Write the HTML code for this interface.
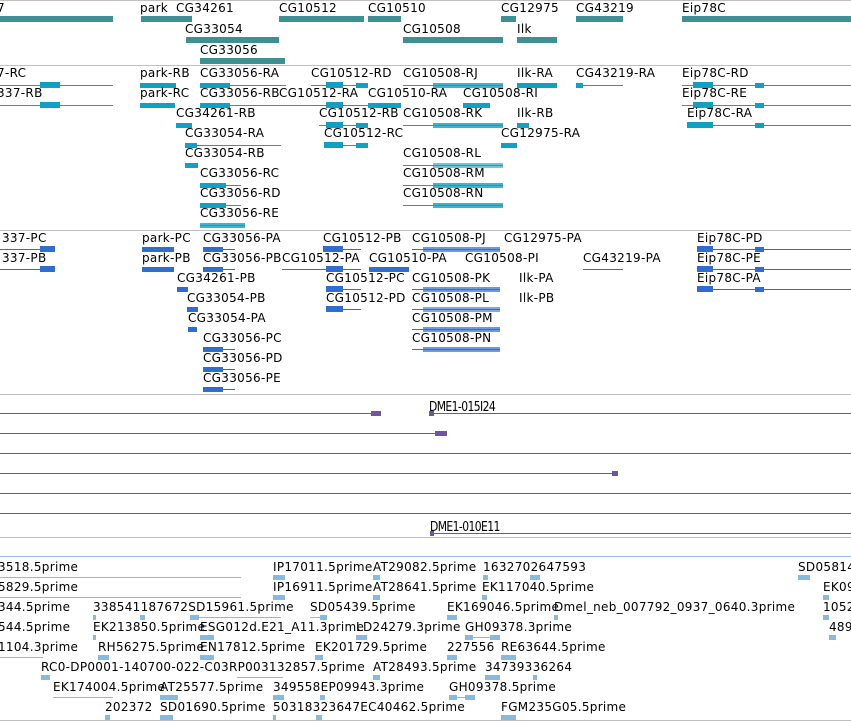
<!DOCTYPE html>
<html><head><meta charset="utf-8"><style>
body{margin:0;width:851px;height:722px;overflow:hidden;background:#fff;position:relative}
.t{position:absolute;font:12px "DejaVu Sans","Liberation Sans",sans-serif;letter-spacing:.3px;line-height:12px;white-space:nowrap;color:#000}
.d{position:absolute;font:12px "DejaVu Sans Condensed","DejaVu Sans",sans-serif;letter-spacing:-.6px;line-height:12px;white-space:nowrap;color:#000;transform:scaleY(1.1);transform-origin:0 0}
i{position:absolute;display:block}
.s{height:1px;background:#c0c0c0;left:0;width:851px}
.c1{background:#3f9095}.c2{background:#0fa0c2}.c3{background:#2f6ecf}.c4{background:#6e55a0}.c5{background:#86badf}
.g{height:6px}.l{height:1px}.a{height:5px}
</style></head><body>
<i class="s" style="top:0"></i><i class="s" style="top:65px"></i><i class="s" style="top:230px"></i><i class="s" style="top:394px"></i><i class="s" style="top:537px"></i><i class="s" style="top:556px;background:#9cc4e2"></i><i class="s" style="top:720px"></i>

<!-- Section 1 -->
<div class="t" style="left:-3px;top:2px">7</div><i class="g c1" style="left:0;top:16px;width:113px"></i>
<div class="t" style="left:140px;top:2px">park</div><div class="t" style="left:176px;top:2px">CG34261</div><i class="g c1" style="left:141px;top:16px;width:51px"></i>
<div class="t" style="left:279px;top:2px">CG10512</div><i class="g c1" style="left:279px;top:16px;width:85px"></i>
<div class="t" style="left:368px;top:2px">CG10510</div><i class="g c1" style="left:368px;top:16px;width:33px"></i>
<div class="t" style="left:501px;top:2px">CG12975</div><i class="g c1" style="left:501px;top:16px;width:15px"></i>
<div class="t" style="left:576px;top:2px">CG43219</div><i class="g c1" style="left:576px;top:16px;width:47px"></i>
<div class="t" style="left:682px;top:2px">Eip78C</div><i class="g c1" style="left:682px;top:16px;width:169px"></i>
<div class="t" style="left:185px;top:23px">CG33054</div><i class="g c1" style="left:186px;top:37px;width:93px"></i>
<div class="t" style="left:403px;top:23px">CG10508</div><i class="g c1" style="left:403px;top:37px;width:100px"></i>
<div class="t" style="left:517px;top:23px">Ilk</div><i class="g c1" style="left:517px;top:37px;width:40px"></i>
<div class="t" style="left:200px;top:44px">CG33056</div><i class="g c1" style="left:200px;top:58px;width:85px"></i>

<!-- Section 2 -->
<div class="t" style="left:-3px;top:67px">7-RC</div><i class="l c2" style="left:0;top:85px;width:113px"></i><i class="g c2" style="left:40px;top:82px;width:20px"></i>
<div class="t" style="left:140px;top:67px">park-RB</div><i class="a c2" style="left:140px;top:83px;width:36px"></i>
<div class="t" style="left:200px;top:67px">CG33056-RA</div><i class="l c2" style="left:200px;top:85px;width:86px"></i><i class="a c2" style="left:200px;top:83px;width:30px"></i>
<div class="t" style="left:311px;top:67px">CG10512-RD</div><i class="l c2" style="left:311px;top:85px;width:57px"></i><i class="g c2" style="left:326px;top:82px;width:17px"></i><i class="a c2" style="left:356px;top:83px;width:12px"></i>
<div class="t" style="left:403px;top:67px">CG10508-RJ</div><i class="l c2" style="left:403px;top:85px;width:100px"></i><i class="a c2" style="left:433px;top:83px;width:70px;opacity:.8"></i>
<div class="t" style="left:517px;top:67px">Ilk-RA</div><i class="a c2" style="left:517px;top:83px;width:40px"></i>
<div class="t" style="left:576px;top:67px">CG43219-RA</div><i class="l c2" style="left:576px;top:85px;width:47px"></i><i class="a c2" style="left:576px;top:83px;width:7px"></i>
<div class="t" style="left:682px;top:67px">Eip78C-RD</div><i class="l c2" style="left:682px;top:85px;width:169px"></i><i class="g c2" style="left:693px;top:82px;width:20px"></i><i class="a c2" style="left:755px;top:83px;width:9px"></i>

<div class="t" style="left:-3px;top:87px">337-RB</div><i class="l c2" style="left:0;top:105px;width:113px"></i><i class="g c2" style="left:40px;top:102px;width:20px"></i>
<div class="t" style="left:140px;top:87px">park-RC</div><i class="a c2" style="left:140px;top:103px;width:35px"></i>
<div class="t" style="left:200px;top:87px">CG33056-RB</div><i class="l c2" style="left:200px;top:105px;width:168px"></i><i class="a c2" style="left:200px;top:103px;width:30px"></i>
<div class="t" style="left:279px;top:87px">CG10512-RA</div><i class="g c2" style="left:326px;top:102px;width:17px"></i>
<div class="t" style="left:368px;top:87px">CG10510-RA</div><i class="a c2" style="left:368px;top:103px;width:33px"></i>
<div class="t" style="left:463px;top:87px">CG10508-RI</div><i class="a c2" style="left:463px;top:103px;width:27px"></i>
<div class="t" style="left:682px;top:87px">Eip78C-RE</div><i class="l c2" style="left:682px;top:105px;width:169px"></i><i class="g c2" style="left:693px;top:102px;width:20px"></i><i class="a c2" style="left:755px;top:103px;width:9px"></i>

<div class="t" style="left:176px;top:107px">CG34261-RB</div><i class="a c2" style="left:176px;top:123px;width:16px"></i>
<div class="t" style="left:319px;top:107px">CG10512-RB</div><i class="l c2" style="left:319px;top:125px;width:49px"></i><i class="g c2" style="left:326px;top:122px;width:17px"></i><i class="a c2" style="left:356px;top:123px;width:12px"></i>
<div class="t" style="left:403px;top:107px">CG10508-RK</div><i class="l c2" style="left:403px;top:125px;width:100px"></i><i class="a c2" style="left:433px;top:123px;width:70px;opacity:.8"></i>
<div class="t" style="left:517px;top:107px">Ilk-RB</div><i class="a c2" style="left:517px;top:123px;width:12px"></i>
<div class="t" style="left:687px;top:107px">Eip78C-RA</div><i class="l c2" style="left:687px;top:125px;width:164px"></i><i class="g c2" style="left:687px;top:122px;width:26px"></i><i class="a c2" style="left:755px;top:123px;width:9px"></i>

<div class="t" style="left:185px;top:127px">CG33054-RA</div><i class="l c2" style="left:185px;top:145px;width:96px"></i><i class="a c2" style="left:185px;top:143px;width:12px"></i>
<div class="t" style="left:324px;top:127px">CG10512-RC</div><i class="l c2" style="left:324px;top:145px;width:44px"></i><i class="g c2" style="left:324px;top:142px;width:19px"></i><i class="a c2" style="left:356px;top:143px;width:12px"></i>
<div class="t" style="left:501px;top:127px">CG12975-RA</div><i class="a c2" style="left:501px;top:143px;width:16px"></i>

<div class="t" style="left:185px;top:147px">CG33054-RB</div><i class="a c2" style="left:185px;top:163px;width:13px"></i>
<div class="t" style="left:403px;top:147px">CG10508-RL</div><i class="l c2" style="left:403px;top:165px;width:100px"></i><i class="a c2" style="left:433px;top:163px;width:70px;opacity:.6"></i>
<div class="t" style="left:200px;top:167px">CG33056-RC</div><i class="l c2" style="left:200px;top:185px;width:41px"></i><i class="a c2" style="left:200px;top:183px;width:26px"></i>
<div class="t" style="left:403px;top:167px">CG10508-RM</div><i class="l c2" style="left:403px;top:185px;width:100px"></i><i class="a c2" style="left:433px;top:183px;width:70px;opacity:.8"></i>
<div class="t" style="left:200px;top:187px">CG33056-RD</div><i class="l c2" style="left:200px;top:205px;width:41px"></i><i class="a c2" style="left:200px;top:203px;width:26px"></i>
<div class="t" style="left:403px;top:187px">CG10508-RN</div><i class="l c2" style="left:403px;top:205px;width:100px"></i><i class="a c2" style="left:433px;top:203px;width:70px;opacity:.8"></i>
<div class="t" style="left:200px;top:207px">CG33056-RE</div><i class="l c2" style="left:200px;top:225px;width:45px"></i><i class="a c2" style="left:200px;top:223px;width:45px;opacity:.8"></i>

<!-- Section 3 -->
<div class="t" style="left:2px;top:232px">337-PC</div><i class="l c3" style="left:0;top:249px;width:55px"></i><i class="g c3" style="left:40px;top:246px;width:15px"></i>
<div class="t" style="left:142px;top:232px">park-PC</div><i class="a c3" style="left:142px;top:247px;width:32px"></i>
<div class="t" style="left:203px;top:232px">CG33056-PA</div><i class="l c3" style="left:203px;top:249px;width:32px"></i><i class="a c3" style="left:203px;top:247px;width:20px"></i>
<div class="t" style="left:323px;top:232px">CG10512-PB</div><i class="l c3" style="left:323px;top:249px;width:38px"></i><i class="g c3" style="left:323px;top:246px;width:20px"></i>
<div class="t" style="left:412px;top:232px">CG10508-PJ</div><i class="l c3" style="left:412px;top:249px;width:88px"></i><i class="a c3" style="left:423px;top:247px;width:77px;opacity:.7"></i>
<div class="t" style="left:504px;top:232px">CG12975-PA</div>
<div class="t" style="left:697px;top:232px">Eip78C-PD</div><i class="l c3" style="left:697px;top:249px;width:154px"></i><i class="g c3" style="left:697px;top:246px;width:16px"></i><i class="a c3" style="left:755px;top:247px;width:9px"></i>

<div class="t" style="left:2px;top:252px">337-PB</div><i class="l c3" style="left:0;top:269px;width:55px"></i><i class="g c3" style="left:40px;top:266px;width:15px"></i>
<div class="t" style="left:142px;top:252px">park-PB</div><i class="a c3" style="left:142px;top:267px;width:32px"></i>
<div class="t" style="left:203px;top:252px">CG33056-PB</div><i class="l c3" style="left:203px;top:269px;width:32px"></i><i class="a c3" style="left:203px;top:267px;width:20px"></i>
<div class="t" style="left:282px;top:252px">CG10512-PA</div><i class="l c3" style="left:282px;top:269px;width:79px"></i><i class="g c3" style="left:326px;top:266px;width:17px"></i>
<div class="t" style="left:369px;top:252px">CG10510-PA</div><i class="a c3" style="left:369px;top:267px;width:40px"></i>
<div class="t" style="left:465px;top:252px">CG10508-PI</div>
<div class="t" style="left:583px;top:252px">CG43219-PA</div><i class="l c3" style="left:583px;top:269px;width:40px"></i>
<div class="t" style="left:697px;top:252px">Eip78C-PE</div><i class="l c3" style="left:697px;top:269px;width:154px"></i><i class="g c3" style="left:697px;top:266px;width:16px"></i><i class="a c3" style="left:755px;top:267px;width:9px"></i>

<div class="t" style="left:177px;top:272px">CG34261-PB</div><i class="a c3" style="left:177px;top:287px;width:11px"></i>
<div class="t" style="left:326px;top:272px">CG10512-PC</div><i class="l c3" style="left:326px;top:289px;width:35px"></i><i class="g c3" style="left:326px;top:286px;width:17px"></i>
<div class="t" style="left:412px;top:272px">CG10508-PK</div><i class="l c3" style="left:412px;top:289px;width:88px"></i><i class="a c3" style="left:423px;top:287px;width:77px;opacity:.7"></i>
<div class="t" style="left:519px;top:272px">Ilk-PA</div>
<div class="t" style="left:697px;top:272px">Eip78C-PA</div><i class="l c3" style="left:697px;top:289px;width:154px"></i><i class="g c3" style="left:697px;top:286px;width:16px"></i><i class="a c3" style="left:755px;top:287px;width:9px"></i>

<div class="t" style="left:187px;top:292px">CG33054-PB</div><i class="a c3" style="left:187px;top:307px;width:11px"></i>
<div class="t" style="left:326px;top:292px">CG10512-PD</div><i class="l c3" style="left:326px;top:309px;width:35px"></i><i class="g c3" style="left:326px;top:306px;width:17px"></i>
<div class="t" style="left:412px;top:292px">CG10508-PL</div><i class="l c3" style="left:412px;top:309px;width:88px"></i><i class="a c3" style="left:423px;top:307px;width:77px;opacity:.6"></i>
<div class="t" style="left:519px;top:292px">Ilk-PB</div>
<div class="t" style="left:188px;top:312px">CG33054-PA</div><i class="a c3" style="left:188px;top:327px;width:9px"></i>
<div class="t" style="left:412px;top:312px">CG10508-PM</div><i class="l c3" style="left:412px;top:329px;width:88px"></i><i class="a c3" style="left:423px;top:327px;width:77px;opacity:.7"></i>
<div class="t" style="left:203px;top:332px">CG33056-PC</div><i class="l c3" style="left:203px;top:349px;width:32px"></i><i class="a c3" style="left:203px;top:347px;width:20px"></i>
<div class="t" style="left:412px;top:332px">CG10508-PN</div><i class="l c3" style="left:412px;top:349px;width:88px"></i><i class="a c3" style="left:423px;top:347px;width:77px;opacity:.7"></i>
<div class="t" style="left:203px;top:352px">CG33056-PD</div><i class="l c3" style="left:203px;top:369px;width:32px"></i><i class="a c3" style="left:203px;top:367px;width:20px"></i>
<div class="t" style="left:203px;top:372px">CG33056-PE</div><i class="l c3" style="left:203px;top:389px;width:32px"></i><i class="a c3" style="left:203px;top:387px;width:20px"></i>

<!-- Section 4 -->
<div class="d" style="left:429px;top:400px">DME1-015I24</div>
<i class="l c4" style="left:0;top:413px;width:375px"></i><i class="a c4" style="left:371px;top:411px;width:10px"></i>
<i class="l c4" style="left:429px;top:413px;width:422px"></i><i class="a c4" style="left:429px;top:411px;width:5px"></i>
<i class="l c4" style="left:0;top:433px;width:440px"></i><i class="a c4" style="left:435px;top:431px;width:12px"></i>
<i class="l c4" style="left:0;top:453px;width:851px"></i>
<i class="l c4" style="left:0;top:473px;width:615px"></i><i class="a c4" style="left:612px;top:471px;width:6px"></i>
<i class="l c4" style="left:0;top:493px;width:851px"></i>
<i class="l c4" style="left:0;top:513px;width:851px"></i>
<div class="d" style="left:430px;top:520px">DME1-010E11</div>
<i class="l c4" style="left:430px;top:533px;width:421px"></i><i class="a c4" style="left:430px;top:531px;width:4px"></i>

<!-- Section 5 -->
<div class="t" style="left:-2px;top:561px">3518.5prime</div><i class="l c5" style="left:0;top:577px;width:241px"></i>
<div class="t" style="left:273px;top:561px">IP17011.5prime</div><i class="a c5" style="left:273px;top:575px;width:12px"></i>
<div class="t" style="left:373px;top:561px">AT29082.5prime</div><i class="a c5" style="left:373px;top:575px;width:7px"></i>
<div class="t" style="left:483px;top:561px">1632702647593</div><i class="a c5" style="left:483px;top:575px;width:5px"></i><i class="a c5" style="left:530px;top:575px;width:10px"></i>
<div class="t" style="left:798px;top:561px">SD05814</div><i class="a c5" style="left:798px;top:575px;width:12px"></i>

<div class="t" style="left:-2px;top:581px">5829.5prime</div><i class="l c5" style="left:0;top:597px;width:241px"></i>
<div class="t" style="left:273px;top:581px">IP16911.5prime</div><i class="a c5" style="left:273px;top:595px;width:12px"></i>
<div class="t" style="left:373px;top:581px">AT28641.5prime</div><i class="a c5" style="left:373px;top:595px;width:7px"></i>
<div class="t" style="left:482px;top:581px">EK117040.5prime</div><i class="a c5" style="left:482px;top:595px;width:5px"></i>
<div class="t" style="left:823px;top:581px">EK09</div><i class="a c5" style="left:823px;top:595px;width:6px"></i>

<div class="t" style="left:-2px;top:601px">344.5prime</div>
<div class="t" style="left:93px;top:601px">338541187672SD15961.5prime</div><i class="a c5" style="left:93px;top:615px;width:3px"></i><i class="a c5" style="left:140px;top:615px;width:5px"></i><i class="l c5" style="left:190px;top:617px;width:91px"></i><i class="a c5" style="left:190px;top:615px;width:9px"></i>
<div class="t" style="left:310px;top:601px">SD05439.5prime</div><i class="l c5" style="left:310px;top:617px;width:17px"></i><i class="a c5" style="left:320px;top:615px;width:7px"></i>
<div class="t" style="left:447px;top:601px">EK169046.5prime</div><i class="a c5" style="left:447px;top:615px;width:10px"></i>
<div class="t" style="left:554px;top:601px">Dmel_neb_007792_0937_0640.3prime</div><i class="a c5" style="left:554px;top:615px;width:4px"></i>
<div class="t" style="left:823px;top:601px">1052</div><i class="a c5" style="left:823px;top:615px;width:6px"></i>

<div class="t" style="left:-2px;top:621px">544.5prime</div>
<div class="t" style="left:93px;top:621px">EK213850.5prime</div><i class="a c5" style="left:93px;top:635px;width:3px"></i>
<div class="t" style="left:200px;top:621px">ESG012d.E21_A11.3prime</div><i class="a c5" style="left:200px;top:635px;width:14px"></i>
<div class="t" style="left:356px;top:621px">LD24279.3prime</div><i class="a c5" style="left:356px;top:635px;width:11px"></i>
<div class="t" style="left:465px;top:621px">GH09378.3prime</div><i class="l c5" style="left:465px;top:637px;width:35px"></i><i class="a c5" style="left:465px;top:635px;width:8px"></i><i class="a c5" style="left:490px;top:635px;width:10px"></i>
<div class="t" style="left:829px;top:621px">489</div><i class="a c5" style="left:829px;top:635px;width:7px"></i>

<div class="t" style="left:-2px;top:641px">1104.3prime</div><i class="l c5" style="left:0;top:657px;width:43px"></i>
<div class="t" style="left:98px;top:641px">RH56275.5prime</div><i class="a c5" style="left:98px;top:655px;width:11px"></i>
<div class="t" style="left:200px;top:641px">EN17812.5prime</div><i class="a c5" style="left:200px;top:655px;width:14px"></i>
<div class="t" style="left:315px;top:641px">EK201729.5prime</div><i class="a c5" style="left:315px;top:655px;width:8px"></i>
<div class="t" style="left:447px;top:641px">227556</div><i class="a c5" style="left:447px;top:655px;width:10px"></i>
<div class="t" style="left:501px;top:641px">RE63644.5prime</div><i class="a c5" style="left:501px;top:655px;width:15px"></i>

<div class="t" style="left:41px;top:661px">RC0-DP0001-140700-022-C03RP003132857.5prime</div><i class="a c5" style="left:41px;top:675px;width:9px"></i><i class="l c5" style="left:237px;top:677px;width:46px"></i>
<div class="t" style="left:373px;top:661px">AT28493.5prime</div><i class="a c5" style="left:373px;top:675px;width:7px"></i>
<div class="t" style="left:485px;top:661px">34739336264</div><i class="a c5" style="left:485px;top:675px;width:15px"></i><i class="a c5" style="left:533px;top:675px;width:4px"></i>

<div class="t" style="left:53px;top:681px">EK174004.5prime</div><i class="l c5" style="left:53px;top:697px;width:60px"></i>
<div class="t" style="left:160px;top:681px">AT25577.5prime</div><i class="a c5" style="left:160px;top:695px;width:18px"></i>
<div class="t" style="left:273px;top:681px">349558EP09943.3prime</div><i class="a c5" style="left:273px;top:695px;width:11px"></i><i class="a c5" style="left:320px;top:695px;width:5px"></i>
<div class="t" style="left:449px;top:681px">GH09378.5prime</div><i class="l c5" style="left:449px;top:697px;width:26px"></i><i class="a c5" style="left:449px;top:695px;width:8px"></i><i class="a c5" style="left:465px;top:695px;width:10px"></i>

<div class="t" style="left:105px;top:701px">202372</div><i class="a c5" style="left:105px;top:715px;width:5px"></i>
<div class="t" style="left:160px;top:701px">SD01690.5prime</div><i class="a c5" style="left:160px;top:715px;width:13px"></i>
<div class="t" style="left:273px;top:701px">50318323647EC40462.5prime</div><i class="a c5" style="left:273px;top:715px;width:3px"></i><i class="a c5" style="left:316px;top:715px;width:6px"></i>
<div class="t" style="left:501px;top:701px">FGM235G05.5prime</div><i class="a c5" style="left:501px;top:715px;width:15px"></i>
</body></html>
